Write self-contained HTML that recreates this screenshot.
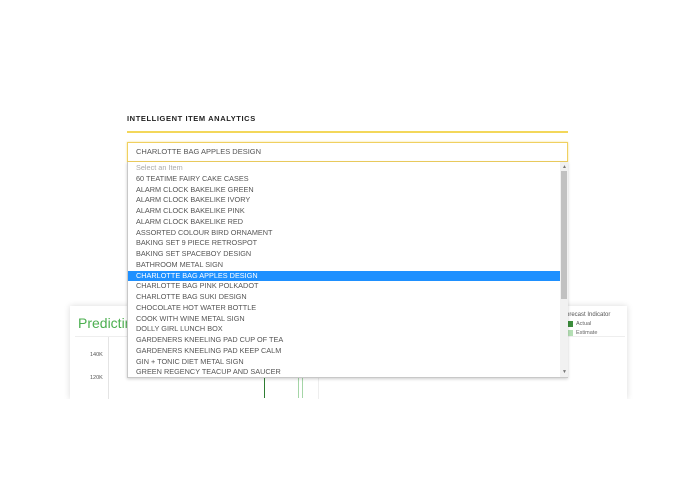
<!DOCTYPE html>
<html><head><style>
body{margin:0;width:695px;height:494px;background:#fff;position:relative;overflow:hidden;font-family:"Liberation Sans",sans-serif}
.a{position:absolute}
.card{left:70px;top:306px;width:557px;height:93px;background:#fff;box-shadow:0 0 6px rgba(0,0,0,.15)}
.list{left:127px;top:162px;width:441px;height:216px;background:#fff;border:1px solid #c8c8c8;border-top:none;box-sizing:border-box;box-shadow:0 1px 3px rgba(0,0,0,.2)}
.row{height:10.75px;line-height:10.75px;font-size:7.3px;color:#555;padding-left:8px;white-space:nowrap}
.sel{background:#1e90ff;color:#fff}
</style></head><body>
<div class="a" style="left:127px;top:114px;font-size:7.5px;font-weight:bold;letter-spacing:.6px;color:#222">INTELLIGENT ITEM ANALYTICS</div>
<div class="a" style="left:127px;top:131px;width:441px;height:2px;background:#f3d75a"></div>
<div class="a card"></div>
<div class="a" style="left:78px;top:315px;font-size:14px;color:#4caf50">Predicting</div>
<div class="a" style="left:75px;top:336px;width:550px;height:1px;background:#eee"></div>
<div class="a" style="left:108px;top:337px;width:1px;height:62px;background:#e4e4e4"></div>
<div class="a" style="left:318px;top:337px;width:1px;height:62px;background:#eee"></div>
<div class="a" style="left:90px;top:352px;font-size:5.5px;color:#555">140K</div>
<div class="a" style="left:90px;top:375px;font-size:5.5px;color:#555">120K</div>
<div class="a" style="left:264px;top:378px;width:1px;height:20px;background:#2e7d32"></div>
<div class="a" style="left:298px;top:378px;width:1px;height:20px;background:#a5d6a7"></div>
<div class="a" style="left:302px;top:378px;width:1px;height:20px;background:#a5d6a7"></div>
<div class="a" style="left:566px;top:312px;font-size:6px;color:#555">orecast Indicator</div>
<div class="a" style="left:568px;top:321px;width:5px;height:6px;background:#3c8d3c"></div>
<div class="a" style="left:576px;top:321px;font-size:5.5px;color:#666">Actual</div>
<div class="a" style="left:568px;top:330px;width:5px;height:6px;background:#b5dfb5"></div>
<div class="a" style="left:576px;top:330px;font-size:5.5px;color:#666">Estimate</div>
<div class="a" style="left:0;top:399px;width:695px;height:95px;background:#fff"></div>
<div class="a" style="left:127px;top:142px;width:441px;height:20px;border:1px solid #f0d060;box-sizing:border-box;background:#fff;box-shadow:0 0 2px #f5e08a;font-size:7.5px;color:#555;line-height:18px;padding-left:8px">CHARLOTTE BAG APPLES DESIGN</div>
<div class="a list">
<div style="padding-top:1px;width:433px">
<div class="row" style="color:#aaa">Select an Item</div>
<div class="row">60 TEATIME FAIRY CAKE CASES</div>
<div class="row">ALARM CLOCK BAKELIKE GREEN</div>
<div class="row">ALARM CLOCK BAKELIKE IVORY</div>
<div class="row">ALARM CLOCK BAKELIKE PINK</div>
<div class="row">ALARM CLOCK BAKELIKE RED</div>
<div class="row">ASSORTED COLOUR BIRD ORNAMENT</div>
<div class="row">BAKING SET 9 PIECE RETROSPOT</div>
<div class="row">BAKING SET SPACEBOY DESIGN</div>
<div class="row">BATHROOM METAL SIGN</div>
<div class="row sel">CHARLOTTE BAG APPLES DESIGN</div>
<div class="row">CHARLOTTE BAG PINK POLKADOT</div>
<div class="row">CHARLOTTE BAG SUKI DESIGN</div>
<div class="row">CHOCOLATE HOT WATER BOTTLE</div>
<div class="row">COOK WITH WINE METAL SIGN</div>
<div class="row">DOLLY GIRL LUNCH BOX</div>
<div class="row">GARDENERS KNEELING PAD CUP OF TEA</div>
<div class="row">GARDENERS KNEELING PAD KEEP CALM</div>
<div class="row">GIN + TONIC DIET METAL SIGN</div>
<div class="row">GREEN REGENCY TEACUP AND SAUCER</div>
</div>
<div class="a" style="left:432px;top:0;width:8px;height:215px;background:#f1f1f1"></div>
<div class="a" style="left:433px;top:9px;width:6px;height:128px;background:#c1c1c1"></div>
<div class="a" style="left:434px;top:2px;font-size:5px;color:#777">▲</div>
<div class="a" style="left:434px;top:207px;font-size:5px;color:#777">▼</div>
</div>
</body></html>
